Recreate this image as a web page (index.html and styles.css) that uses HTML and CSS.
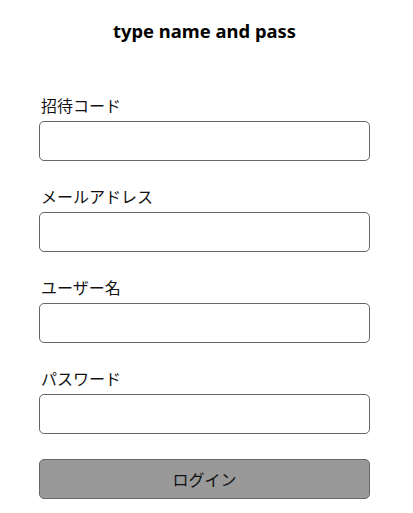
FILE: index.html
```html
<!DOCTYPE html>
<html lang="ja">
<head>
<meta charset="utf-8">
<link rel="stylesheet" href="styles.css">
</head>
<body>
<div class="page">
  <h1 class="title">type name and pass</h1>
  <form class="form">
    <label class="field">
      <span class="label">招待コード</span>
      <input class="input" type="text">
    </label>
    <label class="field">
      <span class="label">メールアドレス</span>
      <input class="input" type="email">
    </label>
    <label class="field">
      <span class="label">ユーザー名</span>
      <input class="input" type="text">
    </label>
    <label class="field">
      <span class="label">パスワード</span>
      <input class="input" type="password">
    </label>
    <button class="button" type="button">ログイン</button>
  </form>
</div>
</body>
</html>
```

FILE: styles.css
```css
html, body {
  margin: 0;
  padding: 0;
  background: #fff;
}
body {
  font-family: "Noto Sans", "Noto Sans CJK JP", sans-serif;
  color: #111;
}
.page {
  width: 331px;
  margin: 0 0 0 39px;
  padding-top: 18px;
}
.title {
  margin: 0;
  text-align: center;
  font-size: 18.4px;
  font-weight: 700;
  line-height: 26px;
  color: #000;
}
.form {
  display: flex;
  flex-direction: column;
  gap: 25px;
  margin-top: 51px;
}
.field {
  display: flex;
  flex-direction: column;
  gap: 6px;
}
.label {
  font-family: "Noto Sans CJK JP", sans-serif;
  font-size: 16px;
  line-height: 20px;
  padding-left: 2px;
  color: #111;
}
.input {
  box-sizing: border-box;
  width: 331px;
  height: 40px;
  margin: 0;
  border: 1px solid #666;
  border-radius: 5px;
  background: #fff;
  font-size: 16px;
}
.button {
  box-sizing: border-box;
  width: 331px;
  height: 40px;
  margin: 0;
  border: 1px solid #666;
  border-radius: 5px;
  background: #999;
  font-family: "Noto Sans CJK JP", sans-serif;
  font-size: 16px;
  color: #111;
}
```
